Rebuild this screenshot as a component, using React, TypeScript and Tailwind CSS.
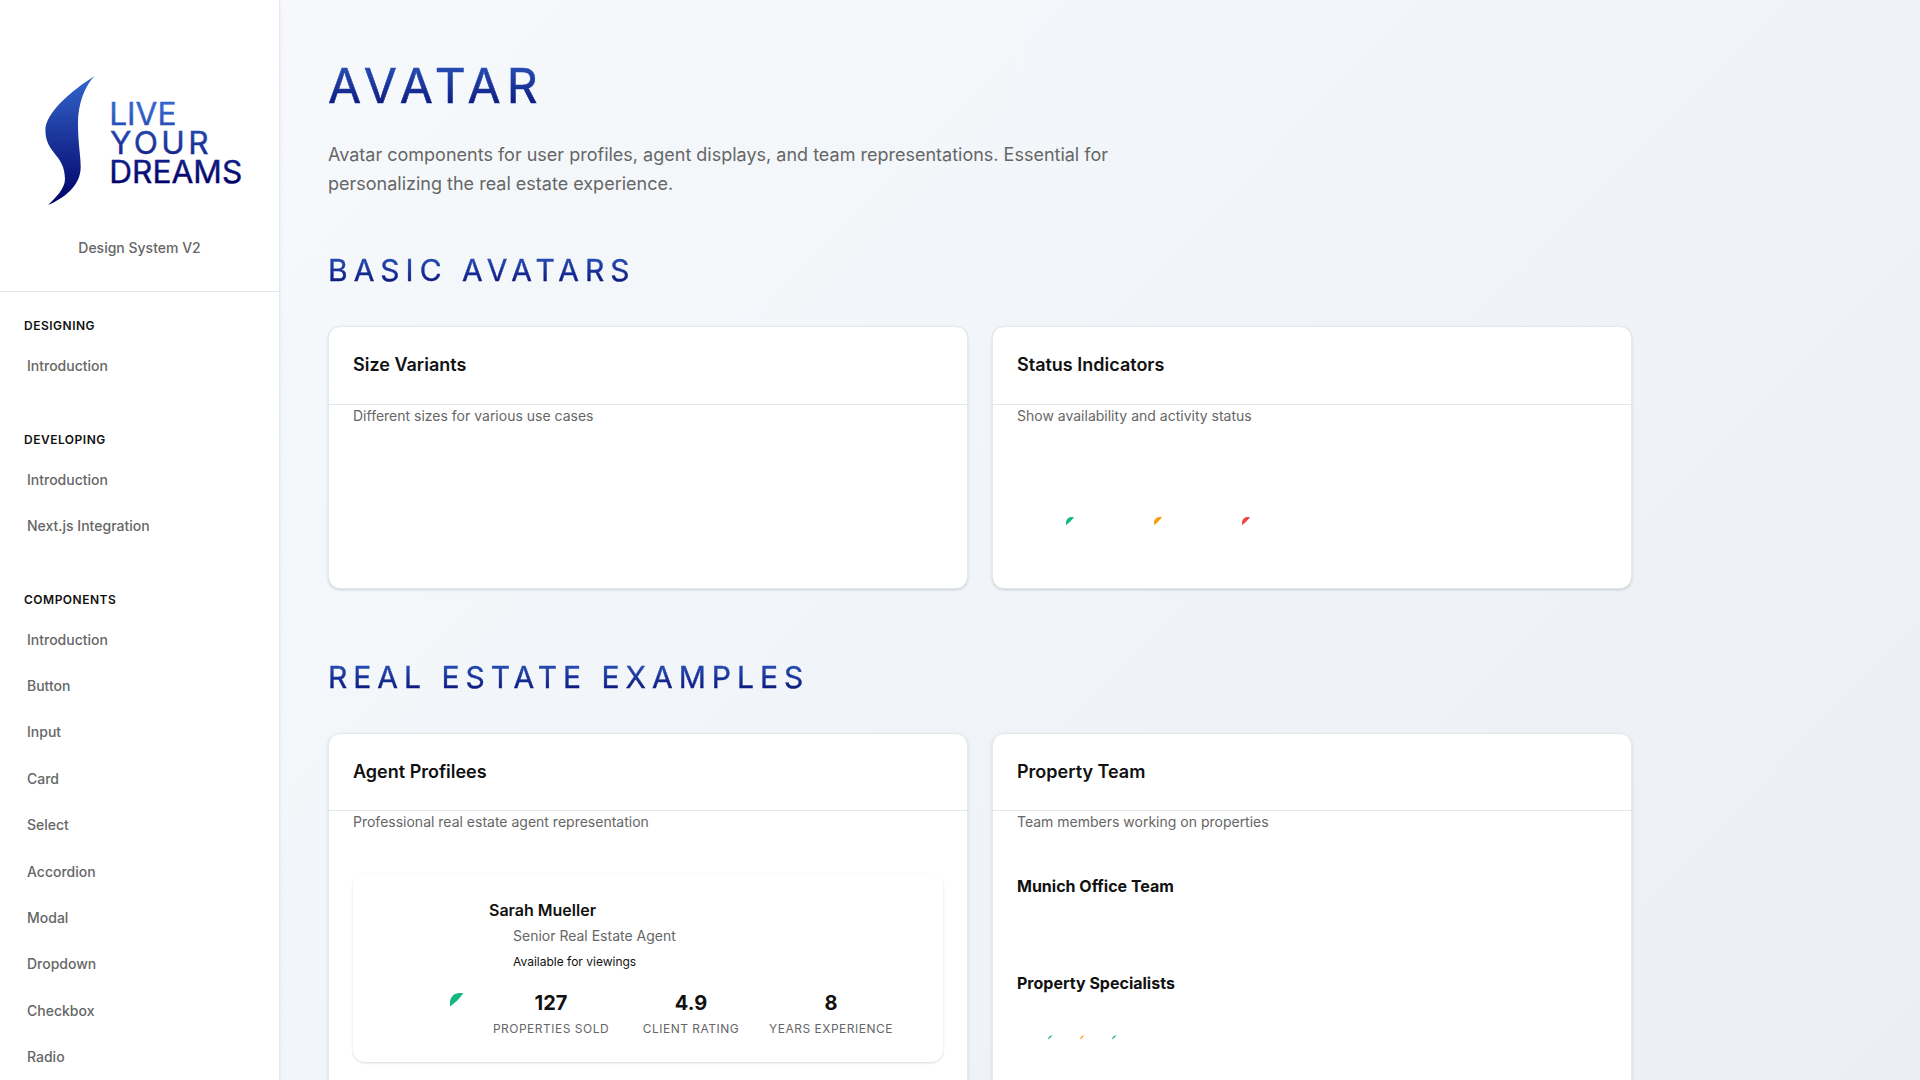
import React from "react";

const navigation = [
  { title: "Designing", items: ["Introduction"] },
  { title: "Developing", items: ["Introduction", "Next.js Integration"] },
  {
    title: "Components",
    items: ["Introduction", "Button", "Input", "Card", "Select", "Accordion", "Modal", "Dropdown", "Checkbox", "Radio"],
  },
];

const stats = [
  { value: "127", label: "Properties Sold" },
  { value: "4.9", label: "Client Rating" },
  { value: "8", label: "Years Experience" },
];

function Logo() {
  return (
    <svg width="200" height="136" viewBox="0 0 200 136" className="block overflow-visible" aria-label="Live Your Dreams">
      <defs>
        <linearGradient id="wave" x1="0" y1="0" x2="0" y2="1">
          <stop offset="0" stopColor="#3366cc" />
          <stop offset="1" stopColor="#000066" />
        </linearGradient>
        <linearGradient id="words" gradientUnits="userSpaceOnUse" x1="0" y1="36" x2="0" y2="112">
          <stop offset="0" stopColor="#3366cc" />
          <stop offset="1" stopColor="#000066" />
        </linearGradient>
      </defs>
      <path
        fill="url(#wave)"
        d="M54.5 4 C31 19 5.400 41 5.400 58 C5.400 82 25 82 25 107 C25 117 15 126 8.200 133 C24 126 40.700 114 40.700 95 C40.700 83 38 72 38 51 C38 31 45 14 54.500 4 Z"
      />
      <g fill="url(#words)" stroke="url(#words)" strokeWidth="0.400" fontFamily="Inter, sans-serif" fontSize="31.6">
        <text x="69.200" y="53.300" textLength="67.200">LIVE</text>
        <text x="70" y="82.300" textLength="98.500">YOUR</text>
        <text x="69.200" y="111.300" textLength="133">DREAMS</text>
      </g>
    </svg>
  );
}

function Leaf({ size, className }: { size: number; className: string }) {
  return (
    <svg width={size} height={size} viewBox="0 0 8 8" className={"absolute " + className}>
      <path fill="currentColor" d="M0 8 V5.600 C0 2.500 2.500 0 5.600 0 H8 C6 3 3.400 5.800 0 8 Z" />
    </svg>
  );
}

function Sliver({ className }: { className: string }) {
  return (
    <svg width="5" height="5" viewBox="0 0 5 5" className={"absolute " + className}>
      <path fill="currentColor" d="M0 4.600 C0.300 2.100 2 0.500 4.400 0.200 C3 2 1.800 3.300 0 4.600 Z" />
    </svg>
  );
}

function Card({ title, description, children, className = "" }: { title: string; description: string; children?: React.ReactNode; className?: string }) {
  return (
    <article className={"overflow-hidden rounded-xl border border-[#e5e7eb] bg-white shadow-[0_1px_3px_rgba(0,0,0,0.1),0_1px_2px_rgba(0,0,0,0.06)] " + className}>
      <header className="border-b border-[#e5e7eb] p-6">
        <h3 className="text-lg leading-[28.8px] font-semibold">{title}</h3>
      </header>
      <div className="px-6">
        <p className="text-sm leading-[22.4px] text-[#666]">{description}</p>
        {children}
      </div>
    </article>
  );
}

function SectionTitle({ children }: { children: React.ReactNode }) {
  return (
    <h2 className="mb-8 bg-[linear-gradient(180deg,#3366cc_0%,#000066_100%)] bg-clip-text text-3xl leading-[48px] font-normal tracking-[0.2em] text-transparent uppercase [-webkit-text-stroke:0.4px_transparent]">
      {children}
    </h2>
  );
}

export default function App() {
  return (
    <div className="flex h-[1080px] w-[1920px] overflow-hidden bg-[linear-gradient(135deg,#f8fafc_0%,#f1f5f9_50%,#ebeef4_100%)] font-['Inter',sans-serif] text-[#111]">
      <aside className="z-10 w-[280px] shrink-0 border-r border-[#e5e7eb] bg-white shadow-[0_1px_3px_rgba(0,0,0,0.08)]">
        <div className="flex h-[292px] flex-col items-center border-b border-[#e5e7eb] pt-[72px]">
          <div className="w-[200px]">
            <Logo />
          </div>
          <p className="mt-[29px] text-sm leading-[22.4px] font-medium text-[#666]">Design System V2</p>
        </div>
        <nav className="flex flex-col gap-[40.2px] pt-6">
          {navigation.map((group) => (
            <section key={group.title}>
              <h4 className="mb-[7.8px] px-6 text-xs leading-[19.2px] font-semibold tracking-[0.5px] uppercase">{group.title}</h4>
              <ul>
                {group.items.map((item) => (
                  <li key={item} className="py-3 pl-[27px] text-sm leading-[22.4px] font-medium text-[#666]">
                    {item}
                  </li>
                ))}
              </ul>
            </section>
          ))}
        </nav>
      </aside>

      <main className="w-[1400px] px-12 pt-12">
        <h1 className="mb-4 bg-[linear-gradient(180deg,#3366cc_0%,#000066_100%)] bg-clip-text text-5xl leading-[76.8px] font-normal tracking-[0.125em] text-transparent uppercase [-webkit-text-stroke:0.6px_transparent]">
          Avatar
        </h1>
        <p className="mb-12 max-w-[800px] text-lg leading-[28.8px] text-[#666]">
          Avatar components for user profiles, agent displays, and team representations. Essential for personalizing the real estate experience.
        </p>

        <section className="mb-16">
          <SectionTitle>Basic Avatars</SectionTitle>
          <div className="grid grid-cols-2 gap-6">
            <Card title="Size Variants" description="Different sizes for various use cases" className="h-[262.2px]" />
            <Card title="Status Indicators" description="Show availability and activity status" className="h-[262.2px]">
              <div className="mt-[38.4px] flex gap-6">
                <div className="relative size-16 text-[#10b981]"><Leaf size={8} className="top-[51px] left-[49px]" /></div>
                <div className="relative size-16 text-[#f59e0b]"><Leaf size={8} className="top-[51px] left-[49px]" /></div>
                <div className="relative size-16 text-[#ef4444]"><Leaf size={8} className="top-[51px] left-[49px]" /></div>
              </div>
            </Card>
          </div>
        </section>

        <section>
          <SectionTitle>Real Estate Examples</SectionTitle>
          <div className="grid grid-cols-2 gap-6">
            <Card title="Agent Profilees" description="Professional real estate agent representation" className="h-[440px]">
              <div className="mt-10 flex h-[188.4px] gap-4 rounded-xl bg-white p-6 shadow-[0_1px_3px_rgba(0,0,0,0.1),0_1px_2px_rgba(0,0,0,0.06)]">
                <div className="relative w-24 shrink-0 text-[#10b981]"><Leaf size={13.4} className="top-[95.400px] left-[73px]" /></div>
                <div>
                  <h4 className="text-base leading-[25.6px] font-semibold">Sarah Mueller</h4>
                  <p className="pl-6 text-sm leading-[26.4px] text-[#666]">Senior Real Estate Agent</p>
                  <p className="pl-6 text-xs leading-[24px]">Available for viewings</p>
                  <dl className="mt-[13px] grid grid-cols-[124px_124px_124px] gap-4 text-center">
                    {stats.map((stat) => (
                      <div key={stat.label} className="flex flex-col-reverse">
                        <dt className="text-xs leading-[19.2px] tracking-[0.5px] whitespace-nowrap text-[#666] uppercase">{stat.label}</dt>
                        <dd className="text-xl leading-[32px] font-bold">{stat.value}</dd>
                      </div>
                    ))}
                  </dl>
                </div>
              </div>
            </Card>
            <Card title="Property Team" description="Team members working on properties" className="h-[440px]">
              <h4 className="mt-10 text-base leading-[25.6px] font-bold">Munich Office Team</h4>
              <div className="h-[71.4px]" />
              <h4 className="text-base leading-[25.6px] font-bold">Property Specialists</h4>
              <div className="mt-4 flex">
                <div className="relative size-8 text-[#10b981]"><Sliver className="top-[23px] left-[31px]" /></div>
                <div className="relative size-8 text-[#f59e0b]"><Sliver className="top-[23px] left-[31px]" /></div>
                <div className="relative size-8 text-[#10b981]"><Sliver className="top-[23px] left-[31px]" /></div>
              </div>
            </Card>
          </div>
        </section>
      </main>
    </div>
  );
}
